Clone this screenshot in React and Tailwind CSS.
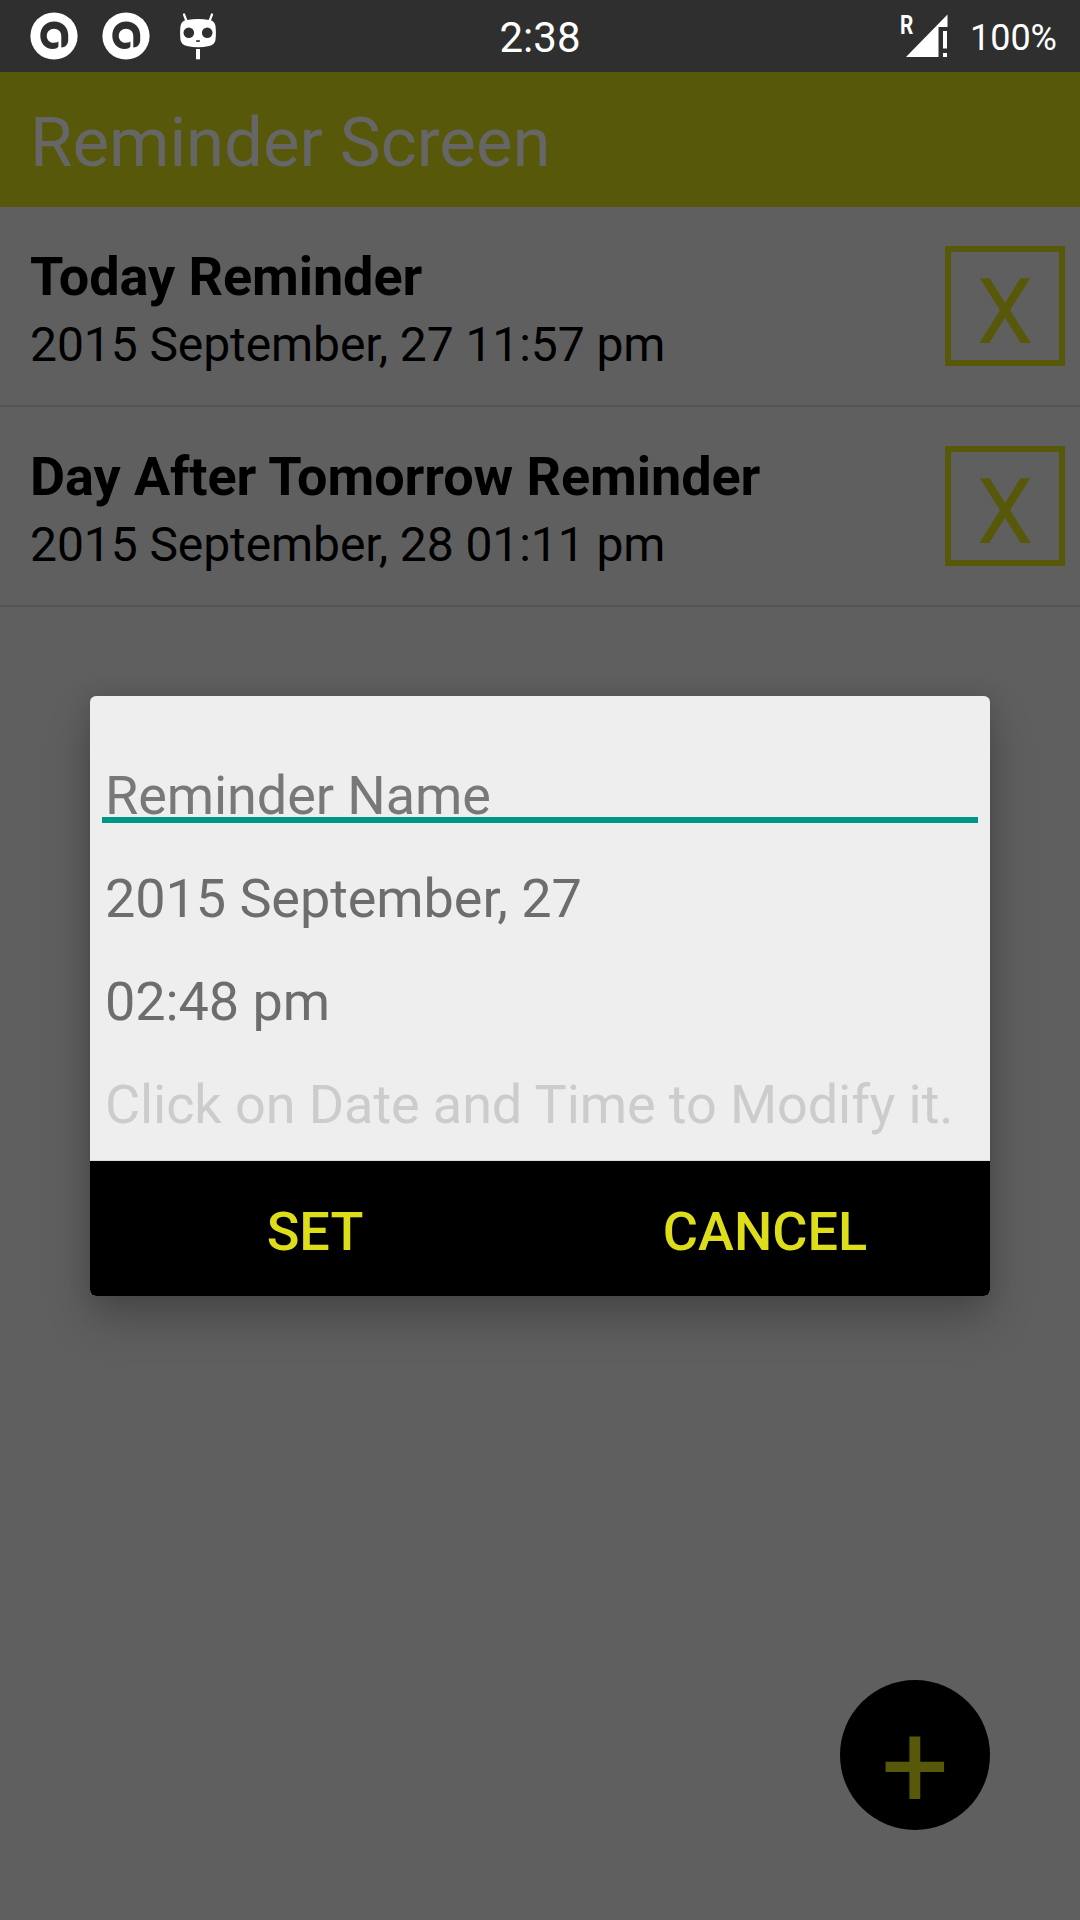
const reminders = [
  { name: "Today Reminder", when: "2015 September, 27 11:57 pm" },
  { name: "Day After Tomorrow Reminder", when: "2015 September, 28 01:11 pm" },
];

function AvastIcon() {
  return (
    <svg width="48" height="48" viewBox="0 0 48 48" className="block">
      <circle cx="24" cy="24" r="23.6" fill="#fff" />
      <path
        d="M24.300 9.400C16 9.400 10.300 15.500 10.300 23.500C10.300 31.500 15.500 37 22.500 37C25.300 37 27.300 36.200 28.300 34.800L31.300 35.600C35.500 35.200 38.200 32.500 38.200 28L38.200 23C38.200 15 32 9.400 24.300 9.400Z"
        fill="#2f2f2f"
      />
      <path
        d="M24 16.800C19.900 16.800 16.800 19.900 16.800 23.900C16.800 27.900 19.900 30.800 23.800 30.800C25.800 30.800 27.300 30.400 28.400 29.600L28.400 36.500L31.300 36.500L31.300 24C31.300 19.900 28.200 16.800 24 16.800Z"
        fill="#fff"
      />
    </svg>
  );
}

function CidIcon() {
  return (
    <svg width="36" height="48" viewBox="0 0 36 48" className="block">
      <path d="M4 2.500L6.500 9M32 2.500L29.500 9" stroke="#fff" strokeWidth="2.200" strokeLinecap="round" />
      <path
        d="M7 8Q18 6 29 8Q34.500 8.500 35.500 14Q36.300 20.500 35.500 28Q34.500 33 29 34Q18 36.500 7 34Q1.500 33 .5 28Q-.3 20.500 .5 14Q1.500 8.500 7 8Z"
        fill="#fff"
      />
      <circle cx="8.800" cy="20.800" r="5.300" fill="#2f2f2f" />
      <circle cx="27.200" cy="20.800" r="5.300" fill="#2f2f2f" />
      <path d="M16 28.300H20L19.500 30H16.500Z" fill="#2f2f2f" />
      <rect x="16" y="37" width="4" height="10.300" fill="#fff" />
    </svg>
  );
}

function StatusBar() {
  return (
    <header className="grid h-[72px] grid-cols-3 items-center bg-[#2f2f2f] text-white">
      <div className="flex items-center pl-[30px]">
        <AvastIcon />
        <div className="ml-6">
          <AvastIcon />
        </div>
        <div className="ml-[30px]">
          <CidIcon />
        </div>
      </div>
      <div className="pt-[3px] text-center text-[42px] leading-[48px]">2:38</div>
      <div className="flex items-start justify-end pr-[23px]">
        <div className="w-[12px] pt-px">
          <span className="block origin-left scale-x-80 text-[26px] leading-[26px] font-bold">R</span>
        </div>
        <svg width="48" height="48" viewBox="0 -1 48 48" className="mr-[10px] block overflow-visible">
          <path d="M35.500 2.500V15H26.500V45H-6Z" fill="#fff" />
          <rect x="31" y="19" width="4" height="17.500" fill="#fff" />
          <rect x="31" y="41" width="4" height="4" fill="#fff" />
        </svg>
        <span className="pt-[3px] text-[36px] leading-[48px]">100%</span>
      </div>
    </header>
  );
}

function ReminderRow({ name, when }) {
  return (
    <li className="flex h-[200px] items-center justify-between border-b-2 border-[#555555] pr-[15px] pl-[30px] text-black">
      <div className="flex flex-col gap-2 pt-[6px] tracking-[-0.08px]">
        <span className="text-[54px] leading-[64px] font-bold">{name}</span>
        <span className="text-[48px] leading-[56px]">{when}</span>
      </div>
      <button className="h-[120px] w-[120px] border-6 border-[#58580a] pt-[11px] text-center text-[90px] leading-[100px] text-[#58580a]">
        X
      </button>
    </li>
  );
}

function ReminderDialog() {
  return (
    <section
      role="dialog"
      className="absolute top-[696px] left-[90px] h-[600px] w-[900px] overflow-hidden rounded-[6px] bg-[#eeeeee] text-[54px] leading-[64px] shadow-[0_24px_44px_rgba(0,0,0,0.22),0_0_24px_rgba(0,0,0,0.12)]"
    >
      <div className="flex h-[465px] flex-col border-b border-[#dcdcdc] px-3 tracking-[-0.08px]">
        <div className="mt-[68px] h-[59px] border-b-6 border-[#009688] pl-[3px] text-[#787878]">Reminder Name</div>
        <div className="mt-[44px] pl-[3px] text-[#6d6d6d]">2015 September, 27</div>
        <div className="mt-[39px] pl-[3px] text-[#6d6d6d]">02:48 pm</div>
        <div className="mt-[39px] pl-[3px] whitespace-nowrap text-[#cccccc]">Click on Date and Time to Modify it.</div>
      </div>
      <div className="grid h-[135px] grid-cols-2 items-center bg-black pt-[7px] font-medium text-[#dddd1a]">
        <button>SET</button>
        <button>CANCEL</button>
      </div>
    </section>
  );
}

export default function App() {
  return (
    <main className="relative h-[1920px] w-[1080px] overflow-hidden bg-[#5f5f5f] font-['Roboto',sans-serif]">
      <StatusBar />
      <h1 className="flex h-[135px] items-center bg-[#58580a] pt-[7px] pl-[30px] text-[69px] leading-[80px] tracking-[-0.08px] text-[#666666]">
        Reminder Screen
      </h1>
      <ul>
        {reminders.map((r) => (
          <ReminderRow key={r.name} name={r.name} when={r.when} />
        ))}
      </ul>
      <button className="absolute top-[1680px] left-[840px] h-[150px] w-[150px] rounded-full bg-black pt-[23px] text-center text-[120px] leading-[128px] text-[#58580a]">
        +
      </button>
      <ReminderDialog />
    </main>
  );
}
